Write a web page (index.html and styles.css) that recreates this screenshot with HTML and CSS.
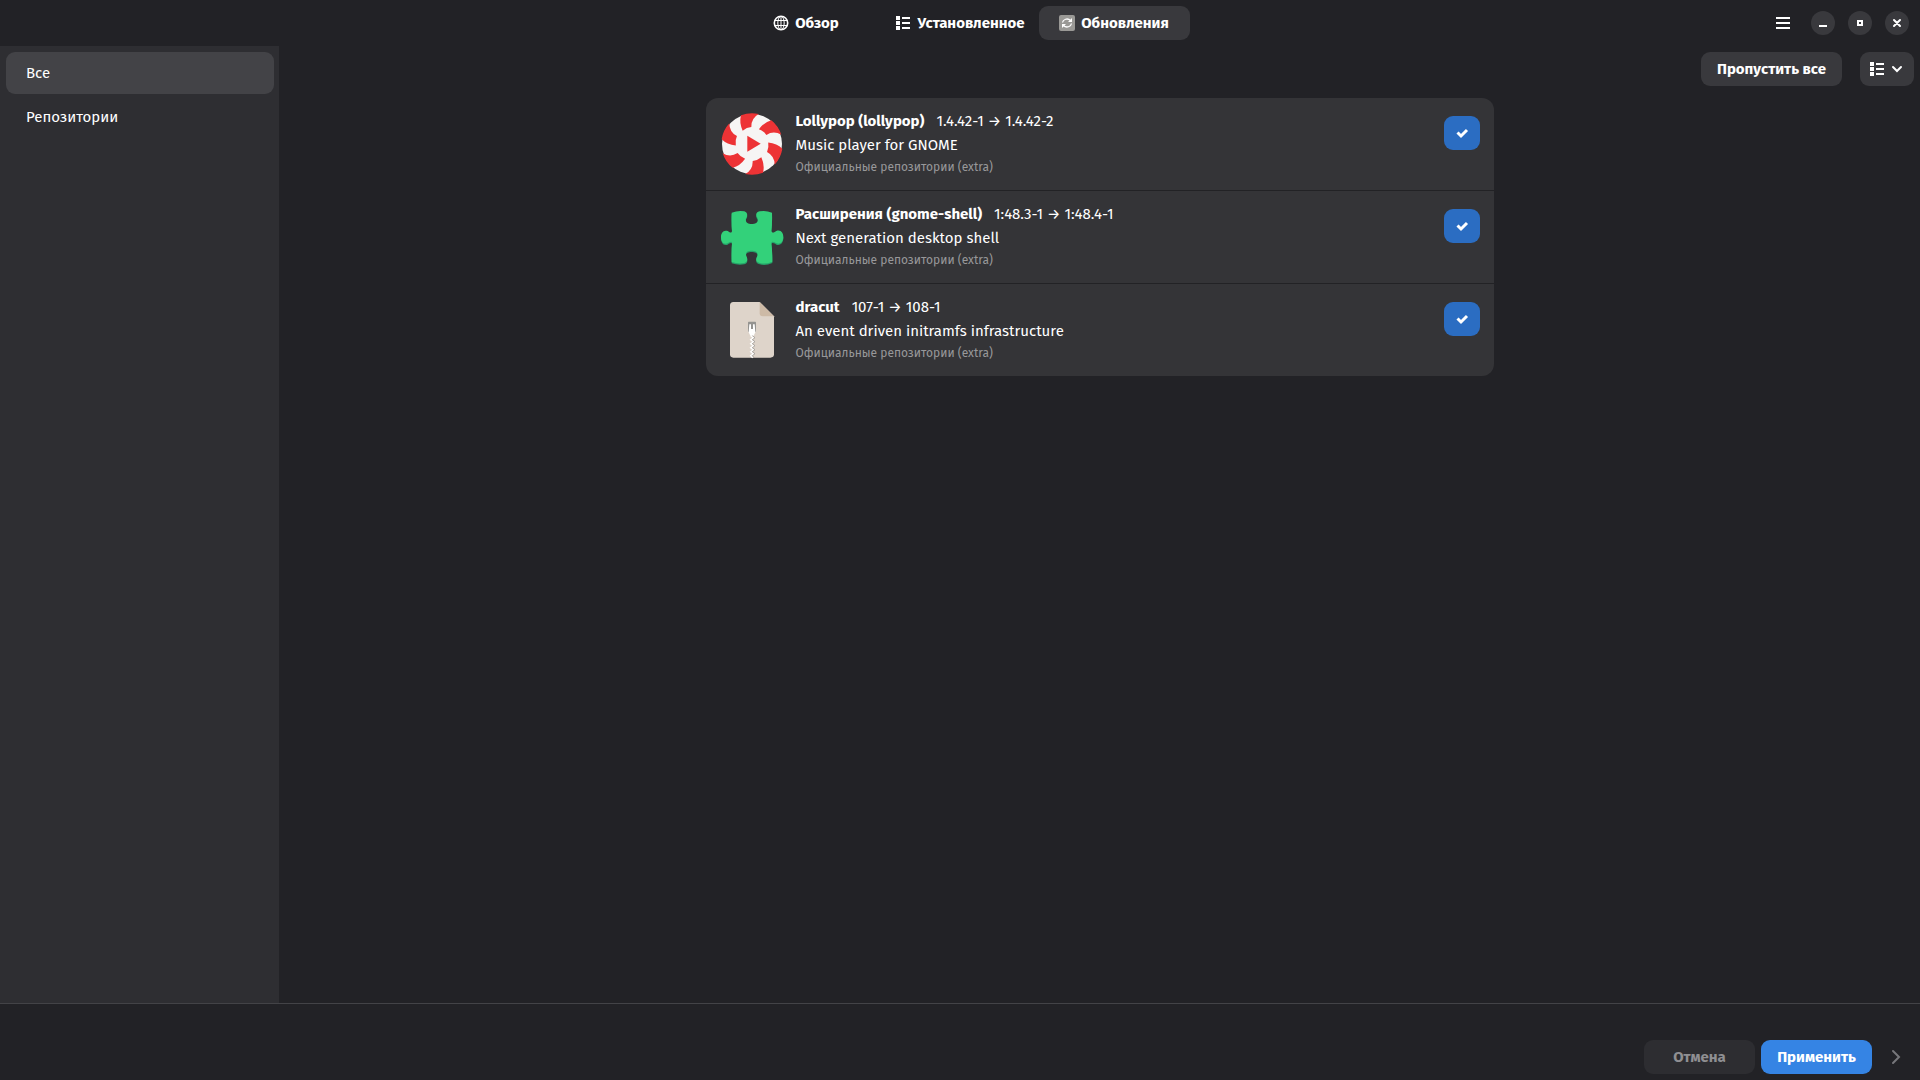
FILE: index.html
```html
<!DOCTYPE html>
<html lang="ru">
<head>
    <meta charset="UTF-8">
    <meta name="viewport" content="width=device-width, initial-scale=1.0">
    <title>Обновления</title>
    <link rel="stylesheet" href="styles.css">
</head>
<body>
    <header class="headerbar">
        <nav class="tabs">
            <button class="tab" type="button">
                <svg class="icon" viewBox="0 0 16 16" fill="none" stroke="currentColor">
                    <circle cx="8" cy="8" r="6.7" stroke-width="1.6"/>
                    <ellipse cx="8" cy="8" rx="3.2" ry="6.7"/>
                    <path d="M8 1v14M1.5 5.5h13M1.5 10.5h13"/>
                </svg>
                Обзор
            </button>
            <button class="tab" type="button">
                <svg class="icon" viewBox="0 0 16 16" fill="currentColor">
                    <path d="M1 1h4v4H1zM1 6h4v4H1zM1 11h4v4H1zM7 2h8v2H7zM7 7h8v2H7zM7 12h8v2H7z"/>
                </svg>
                Установленное
            </button>
            <button class="tab active" type="button">
                <svg class="icon" viewBox="0 0 16 16">
                    <rect width="16" height="16" rx="2" fill="#9a9996"/>
                    <path d="M3.5 7.5C4 4.500 8.500 2.500 11.500 5.500M12.500 8.500C12 11.500 7.500 13.500 4.500 10.500" fill="none" stroke="#fff" stroke-width="1.3"/>
                    <path d="M13 3v4H9zM3 13V9h4z" fill="#fff"/>
                </svg>
                Обновления
            </button>
        </nav>
        <div class="window-controls">
            <button class="menu-button" type="button" aria-label="Меню">
                <svg class="icon" viewBox="0 0 16 16" fill="currentColor">
                    <path d="M1 2h14v2H1zM1 7h14v2H1zM1 12h14v2H1z"/>
                </svg>
            </button>
            <button class="control" type="button" aria-label="Свернуть">
                <svg class="icon" viewBox="0 0 16 16" fill="currentColor"><path d="M4 10h8v2H4z"/></svg>
            </button>
            <button class="control" type="button" aria-label="Развернуть">
                <svg class="icon" viewBox="0 0 16 16" fill="none" stroke="currentColor" stroke-width="2"><path d="M6 6h4v4H6z"/></svg>
            </button>
            <button class="control" type="button" aria-label="Закрыть">
                <svg class="icon" viewBox="0 0 16 16" fill="none" stroke="currentColor" stroke-width="2" stroke-linecap="round"><path d="M5 5l6 6M11 5l-6 6"/></svg>
            </button>
        </div>
    </header>

    <div class="content">
        <aside class="sidebar">
            <button class="sidebar-item active" type="button">Все</button>
            <button class="sidebar-item" type="button">Репозитории</button>
        </aside>

        <main class="main">
            <div class="toolbar">
                <button class="btn" type="button">Пропустить все</button>
                <button class="btn view-button" type="button" aria-label="Вид">
                    <svg class="icon" viewBox="0 0 16 16" fill="currentColor">
                        <path d="M1 1h4v4H1zM1 6h4v4H1zM1 11h4v4H1zM7 2h8v2H7zM7 7h8v2H7zM7 12h8v2H7z"/>
                    </svg>
                    <svg class="icon" viewBox="0 0 16 16" fill="none" stroke="currentColor" stroke-width="2" stroke-linecap="round"><path d="M4 6l4 4 4-4"/></svg>
                </button>
            </div>

            <ul class="updates">
                <li class="update">
                    <svg class="app-icon" viewBox="15 21 192 192">
                        <circle cx="111" cy="117" r="90" fill="#f6f5f4"/>
                        <g fill="#ed3335">
                            <path id="stripe" d="M78 31A92 92 0 0 1 131 27Q108 40 109 66Q95 67 83 77Q72 53 78 31Z"/>
                            <use href="#stripe" transform="rotate(60 111 117)"/>
                            <use href="#stripe" transform="rotate(120 111 117)"/>
                            <use href="#stripe" transform="rotate(180 111 117)"/>
                            <use href="#stripe" transform="rotate(240 111 117)"/>
                            <use href="#stripe" transform="rotate(300 111 117)"/>
                        </g>
                        <path d="M97 92v48l40-24z" fill="#ed3335"/>
                    </svg>
                    <div class="info">
                        <div class="title"><strong>Lollypop (lollypop)</strong><span>1.4.42-1 → 1.4.42-2</span></div>
                        <p class="summary">Music player for GNOME</p>
                        <p class="repo">Официальные репозитории (extra)</p>
                    </div>
                    <button class="check" type="button" aria-pressed="true" aria-label="Обновить Lollypop">
                        <svg class="icon" viewBox="0 0 16 16" fill="none" stroke="currentColor" stroke-width="3"><path d="M3.500 7.500l3.500 3.500 6-6"/></svg>
                    </button>
                </li>
                <li class="update">
                    <svg class="app-icon" viewBox="15 15 192 192">
                        <defs>
                            <path id="puzzle" d="M50 38Q70 30 88 34C99 38 98 48 93 54C90 67 98 72 110 72C122 72 131 67 128 55C121 46 122 37 134 34Q152 30 171 38Q172 70 169 93C172 101 178 97 184 93C198 88 205 100 205 111C205 122 198 135 184 130C178 125 171 122 169 129Q172 150 172 185Q152 194 134 189C122 186 121 177 127 168C131 156 121 152 110 152C98 152 90 157 94 168C99 177 98 186 88 189Q70 193 50 186Q49 150 51 129C50 122 44 125 38 130C24 135 18 123 18 111C18 100 24 89 38 93C44 98 50 100 51 93Q49 70 50 38Z"/>
                        </defs>
                        <use href="#puzzle" y="4" fill="#26a269"/>
                        <use href="#puzzle" fill="#33d17a"/>
                    </svg>
                    <div class="info">
                        <div class="title"><strong>Расширения (gnome-shell)</strong><span>1:48.3-1 → 1:48.4-1</span></div>
                        <p class="summary">Next generation desktop shell</p>
                        <p class="repo">Официальные репозитории (extra)</p>
                    </div>
                    <button class="check" type="button" aria-pressed="true" aria-label="Обновить gnome-shell">
                        <svg class="icon" viewBox="0 0 16 16" fill="none" stroke="currentColor" stroke-width="3"><path d="M3.500 7.500l3.500 3.500 6-6"/></svg>
                    </button>
                </li>
                <li class="update">
                    <svg class="app-icon" viewBox="15 15 192 192">
                        <path d="M55 27H134L177 70V184Q177 194 166 194H55Q45 194 45 184V38Q45 27 55 27Z" fill="#ded4ca"/>
                        <path d="M134 27L177 70H143Q134 70 134 61Z" fill="#cdbaa6"/>
                        <path d="M101 86h20q2 0 2 2v28h-24V88q0-2 2-2z" fill="#949390"/>
                        <path d="M103 94h5v14h6V94h5l2 24-5 10h-10l-5-10z" fill="#fff"/>
                        <path d="M107 128l8 6-8 6 8 6-8 6 8 6-8 6 8 6-8 6 8 6-8 6 6 6" fill="none" stroke="#fff" stroke-width="4"/>
                        <path d="M112 128l8 6-8 6 8 6-8 6 8 6-8 6 8 6-8 6 8 6-8 6 6 6" fill="none" stroke="#949390" stroke-width="2"/>
                    </svg>
                    <div class="info">
                        <div class="title"><strong>dracut</strong><span>107-1 → 108-1</span></div>
                        <p class="summary">An event driven initramfs infrastructure</p>
                        <p class="repo">Официальные репозитории (extra)</p>
                    </div>
                    <button class="check" type="button" aria-pressed="true" aria-label="Обновить dracut">
                        <svg class="icon" viewBox="0 0 16 16" fill="none" stroke="currentColor" stroke-width="3"><path d="M3.500 7.500l3.500 3.500 6-6"/></svg>
                    </button>
                </li>
            </ul>
        </main>
    </div>

    <footer class="actionbar">
        <button class="btn action" type="button" disabled>Отмена</button>
        <button class="btn action apply" type="button">Применить</button>
        <button class="details" type="button" aria-label="Подробности" disabled>
            <svg class="icon" viewBox="0 0 16 16" fill="none" stroke="currentColor" stroke-width="2" stroke-linecap="round"><path d="M5 2l6 6-6 6"/></svg>
        </button>
    </footer>
</body>
</html>
```
FILE: styles.css
```css
* {
    margin: 0;
    padding: 0;
    box-sizing: border-box;
}

body {
    font-family: "Fira Sans", "Noto Sans", sans-serif;
    font-size: 15px;
    line-height: 20px;
    background-color: #222226;
    color: #fff;
    display: flex;
    flex-direction: column;
    min-height: 100vh;
}

button {
    font: inherit;
    color: inherit;
    background: none;
    border: none;
    cursor: pointer;
}

.icon {
    width: 16px;
    height: 16px;
    flex: none;
}

/* Header */
.headerbar {
    display: grid;
    grid-template-columns: 1fr auto 1fr;
    align-items: center;
    height: 46px;
}

.tabs {
    grid-column: 2;
    display: grid;
    grid-template-columns: repeat(3, 1fr);
    gap: 3px;
}

.tab {
    display: flex;
    align-items: center;
    justify-content: center;
    gap: 6px;
    min-width: 151px;
    height: 34px;
    border-radius: 9px;
    font-weight: bold;
}

.tab.active {
    background-color: #39393d;
}

.window-controls {
    display: flex;
    align-items: center;
    justify-content: flex-end;
    gap: 13px;
    padding-right: 11px;
}

.menu-button {
    display: flex;
    padding: 9px 7px;
    border-radius: 9px;
}

.control {
    display: flex;
    padding: 4px;
    border-radius: 50%;
    background-color: #39393d;
}

/* Sidebar and main area */
.content {
    display: flex;
    flex: 1;
}

.sidebar {
    width: 279px;
    padding: 6px 5px 6px 6px;
    background-color: #2e2e32;
}

.sidebar-item {
    display: block;
    width: 100%;
    height: 42px;
    margin-bottom: 2px;
    padding: 0 20px;
    border-radius: 9px;
    text-align: left;
}

.sidebar-item.active {
    background-color: #434347;
}

.main {
    flex: 1;
}

.toolbar {
    display: flex;
    justify-content: flex-end;
    gap: 18px;
    padding: 6px;
}

.btn {
    height: 34px;
    padding: 0 16px;
    border-radius: 9px;
    background-color: #39393d;
    font-weight: bold;
}

.view-button {
    display: flex;
    align-items: center;
    gap: 4px;
    padding: 0 9px;
}

/* List of updates */
.updates {
    max-width: 788px;
    margin: 6px auto;
    border-radius: 12px;
    background-color: #343437;
    list-style: none;
}

.update {
    display: flex;
    align-items: flex-start;
    padding: 14px;
}

.update + .update {
    border-top: 1px solid #222225;
}

.app-icon {
    width: 64px;
    height: 64px;
    margin-right: 12px;
}

.info {
    flex: 1;
}

.title {
    display: flex;
    gap: 12px;
    line-height: 18px;
}

.summary {
    margin-top: 5px;
}

.repo {
    margin-top: 4px;
    font-size: 12px;
    line-height: 16px;
    color: #98989a;
}

.check {
    display: flex;
    margin-top: 4px;
    padding: 9px 10px;
    border-radius: 9px;
    background-color: #2b6dc2;
}

/* Bottom bar */
.actionbar {
    display: flex;
    justify-content: flex-end;
    gap: 6px;
    padding: 36px 6px 6px;
    border-top: 1px solid #434347;
}

.action {
    min-width: 111px;
}

.action:disabled {
    background-color: #2d2d31;
    color: #8f8f92;
}

.action.apply {
    background-color: #3584e4;
}

.details {
    display: flex;
    align-items: center;
    padding: 9px 10px;
    color: #77777b;
}
```
